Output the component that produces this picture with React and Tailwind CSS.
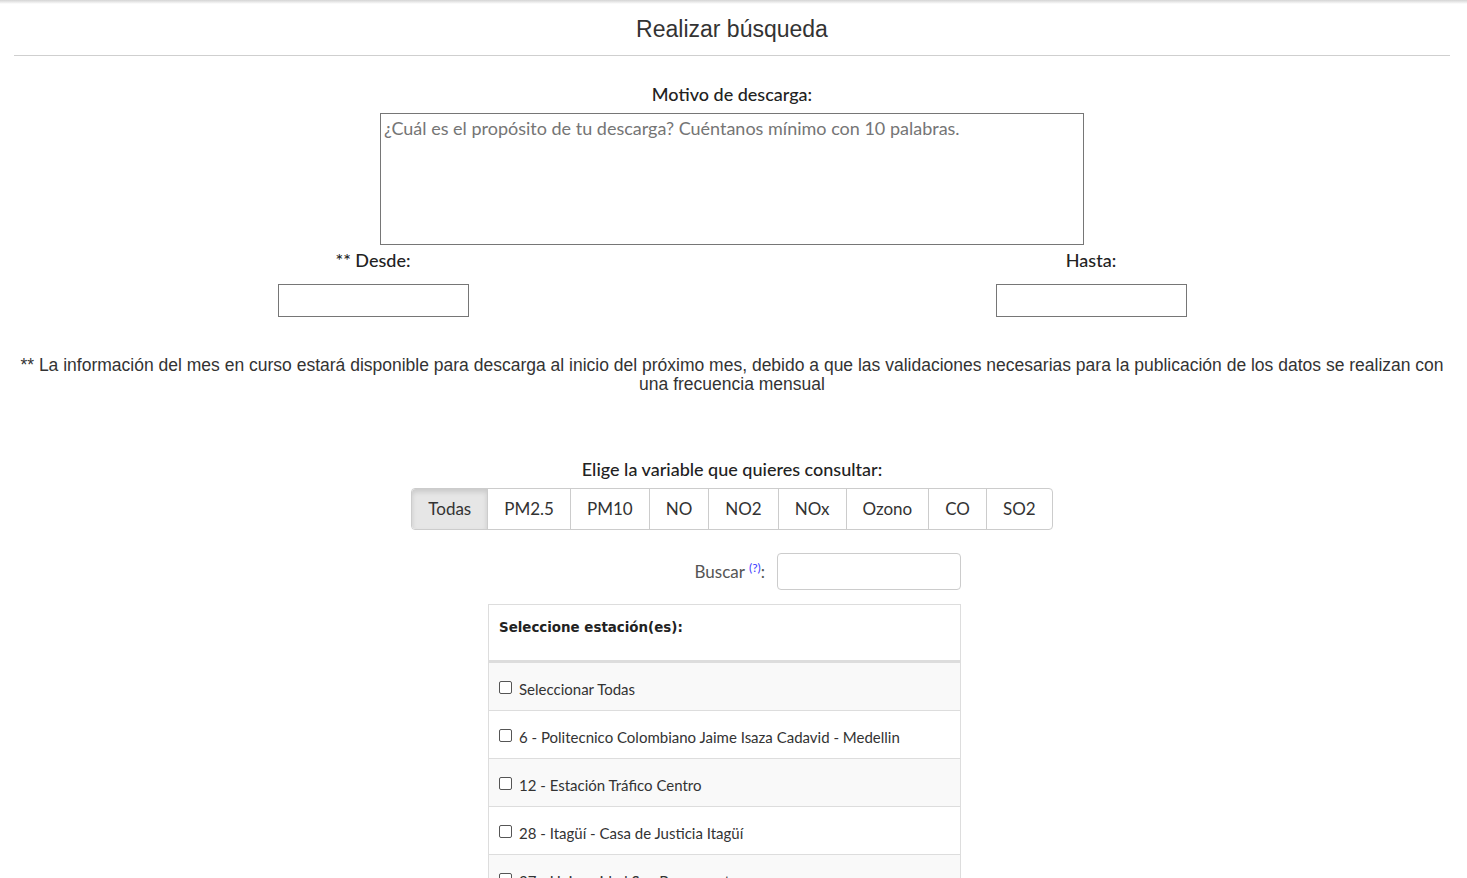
import React from 'react';

const variables = ['Todas', 'PM2.5', 'PM10', 'NO', 'NO2', 'NOx', 'Ozono', 'CO', 'SO2'];

const stations = [
  'Seleccionar Todas',
  '6 - Politecnico Colombiano Jaime Isaza Cadavid - Medellin',
  '12 - Estación Tráfico Centro',
  '28 - Itagüí - Casa de Justicia Itagüí',
  '37 - Universidad San Buenaventura',
];

const lato = { fontFamily: 'Lato, "Noto Sans", sans-serif' };

export default function App() {
  return (
    <div className="min-h-screen bg-white text-[#333]">
      <div className="h-[4px] bg-gradient-to-b from-[#d4d4d4] to-white" />

      <div className="ml-[14px] mr-[17px]">
        {/* Title */}
        <h2
          className="pt-[11px] pb-[12px] text-center text-[23px] leading-[28px] text-[#333]"
          style={{ fontFamily: '"Liberation Sans", Arial, sans-serif' }}
        >
          Realizar búsqueda
        </h2>
        <div className="h-px bg-[#cfcfcf]" />

        {/* Motivo */}
        <div className="mt-[26px] flex flex-col items-center" style={lato}>
          <label className="text-[18px] leading-6 font-medium text-[#222]">Motivo de descarga:</label>
          <textarea
            className="mt-[7px] h-[132px] w-[704px] resize-none border border-[#767676] px-[3px] py-[2px] text-[18px] leading-6 outline-none placeholder:text-[#757575]"
            style={lato}
            placeholder="¿Cuál es el propósito de tu descarga? Cuéntanos mínimo con 10 palabras."
          />
        </div>

        {/* Fechas */}
        <div className="mt-[3px] grid grid-cols-2" style={lato}>
          <div className="flex flex-col items-center">
            <label className="text-[18px] leading-6 font-medium text-[#222]">** Desde:</label>
            <input className="mt-[12px] h-[33px] w-[191px] border border-[#767676] outline-none" />
          </div>
          <div className="flex flex-col items-center">
            <label className="text-[18px] leading-6 font-medium text-[#222]">Hasta:</label>
            <input className="mt-[12px] h-[33px] w-[191px] border border-[#767676] outline-none" />
          </div>
        </div>

        {/* Nota */}
        <p
          className="mt-[39px] text-center text-[17.5px] leading-[19px] text-[#333]"
          style={{ fontFamily: '"Liberation Sans", Arial, sans-serif' }}
        >
          ** La información del mes en curso estará disponible para descarga al inicio del próximo mes, debido a que las
          validaciones necesarias para la publicación de los datos se realizan con una frecuencia mensual
        </p>

        {/* Variables */}
        <div className="mt-[63px] flex flex-col items-center" style={lato}>
          <label className="text-[18px] leading-6 font-medium text-[#222]">Elige la variable que quieres consultar:</label>
          <div className="mt-[7px] flex h-[42px] rounded-[4px] border border-[#ccc]">
            {variables.map((v, i) => (
              <button
                key={v}
                className={
                  i === 0
                    ? 'rounded-l-[4px] bg-[#e6e6e6] px-4 text-[17px] text-[#333] shadow-[inset_0_3px_5px_rgba(0,0,0,0.125)]'
                    : 'border-l border-[#ccc] px-4 text-[17px] text-[#333]'
                }
              >
                {v}
              </button>
            ))}
          </div>
        </div>

        {/* Buscar */}
        <div className="mt-[23px] flex justify-center pr-[15px]" style={lato}>
          <div className="flex w-[473px] items-center justify-end gap-3">
            <span className="text-[17px] text-[#555]">
              Buscar <sup className="text-[12px] text-[#3b3bff]">(?)</sup>:
            </span>
            <input className="h-[37px] w-[184px] rounded-[4px] border border-[#ccc] outline-none" />
          </div>
        </div>

        {/* Estaciones */}
        <div className="mt-[14px] flex justify-center pr-[15px]">
          <div className="w-[473px] border border-[#ddd]" style={lato}>
            <div className="h-[57px] border-b-2 border-[#ddd] px-[10px] pt-[9px]">
              <span
                className="font-bold text-[#222]"
                style={{ fontFamily: '"DejaVu Sans", Verdana, sans-serif', fontSize: '13.4px' }}
              >
                Seleccione estación(es):
              </span>
            </div>
            {stations.map((s, i) => (
              <label
                key={s}
                className={
                  'flex h-[48px] items-center gap-[7px] border-t border-[#ddd] px-[10px] pt-[5px] text-[15px] text-[#333] first:border-t-0 ' +
                  (i % 2 === 0 ? 'bg-[#f9f9f9]' : 'bg-white')
                }
              >
                <span className="h-[13px] w-[13px] -translate-y-[2px] rounded-[2px] border border-[#555] bg-white" />
                {s}
              </label>
            ))}
          </div>
        </div>
      </div>
    </div>
  );
}
